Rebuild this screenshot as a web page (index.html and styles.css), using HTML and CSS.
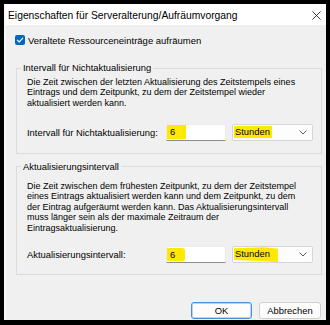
FILE: index.html
```html
<!DOCTYPE html>
<html lang="de">
<head>
<meta charset="utf-8">
<title>Eigenschaften für Serveralterung/Aufräumvorgang</title>
<link rel="stylesheet" href="styles.css">
</head>
<body>
<div class="window">
  <div class="titlebar">
    <span class="title">Eigenschaften für Serveralterung/Aufräumvorgang</span>
    <svg class="close" width="10" height="10" viewBox="0 0 10 10"><path d="M0.5 0.5 L9.5 9.5 M9.5 0.5 L0.5 9.5" stroke="#2b2b2b" stroke-width="1" fill="none"/></svg>
  </div>
  <div class="content">
    <label class="check">
      <span class="box"><svg width="10" height="10" viewBox="0 0 10 10"><path d="M2.3 5.2 L4.2 7 L7.8 3.2" stroke="#fff" stroke-width="1.1" fill="none" stroke-linecap="round" stroke-linejoin="round"/></svg></span>
      <span class="check-label">Veraltete Ressourceneinträge aufräumen</span>
    </label>

    <fieldset class="group group-1">
      <legend>Intervall für Nichtaktualisierung</legend>
      <div class="group-body body-1">
        <p class="desc">Die Zeit zwischen der letzten Aktualisierung des Zeitstempels eines<br>Eintrags und dem Zeitpunkt, zu dem der Zeitstempel wieder<br>aktualisiert werden kann.</p>
        <div class="row row-1">
          <span class="lbl">Intervall für Nichtaktualisierung:</span>
          <div class="input"><span class="hl hl-num">6</span></div>
          <div class="select"><span class="hl hl-unit">Stunden</span><svg class="chev" width="8" height="5" viewBox="0 0 8 5"><path d="M0.5 0.5 L4 4 L7.5 0.5" stroke="#5a5a5a" stroke-width="1" fill="none"/></svg></div>
        </div>
      </div>
    </fieldset>

    <fieldset class="group group-2">
      <legend>Aktualisierungsintervall</legend>
      <div class="group-body body-2">
        <p class="desc">Die Zeit zwischen dem frühesten Zeitpunkt, zu dem der Zeitstempel<br>eines Eintrags aktualisiert werden kann und dem Zeitpunkt, zu dem<br>der Eintrag aufgeräumt werden kann. Das Aktualisierungsintervall<br>muss länger sein als der maximale Zeitraum der<br>Eintragsaktualisierung.</p>
        <div class="row row-2">
          <span class="lbl">Aktualisierungsintervall:</span>
          <div class="input"><span class="hl hl-num hl-num-2">6</span></div>
          <div class="select"><span class="hl hl-unit hl-unit-2">Stunden</span><svg class="chev" width="8" height="5" viewBox="0 0 8 5"><path d="M0.5 0.5 L4 4 L7.5 0.5" stroke="#5a5a5a" stroke-width="1" fill="none"/></svg></div>
        </div>
      </div>
    </fieldset>

    <div class="buttons">
      <button class="btn btn-default">OK</button>
      <button class="btn">Abbrechen</button>
    </div>
  </div>
</div>
</body>
</html>
```

FILE: styles.css
```css
* { box-sizing: border-box; }

html, body {
  margin: 0;
  background: #000;
}

body {
  padding: 4px 4px 5px 4px;
  font-family: "Liberation Sans", Arial, sans-serif;
  color: #000;
}

.window {
  width: 322px;
  height: 316px;
  background: #f0f0f0;
  border-left: 2px solid #f8f8f8;
  display: flex;
  flex-direction: column;
  overflow: hidden;
}

.titlebar {
  height: 21px;
  background: #fff;
  display: flex;
  align-items: center;
  justify-content: space-between;
  padding: 1px 5px 0 2px;
  flex: none;
}

.title {
  font-size: 10.3px;
  white-space: nowrap;
}

.close {
  display: block;
  width: 9px;
  height: 9px;
}

.content {
  flex: 1;
  padding: 9px 4px 0 10px;
  display: flex;
  flex-direction: column;
}

.check {
  display: flex;
  align-items: center;
  height: 12px;
  gap: 3px;
  font-size: 9.5px;
  white-space: nowrap;
}

.box {
  width: 10px;
  height: 10px;
  border-radius: 2px;
  background: #0067c0;
  display: block;
  flex: none;
  margin-left: -1px;
}

.box svg { display: block; }

.group {
  margin: 16px 0 0 0;
  padding: 0;
  border: 1px solid #dcdcdc;
  min-width: 0;
}

.group-2 { margin-top: 7px; }

legend {
  margin-left: 4px;
  padding: 0 2px;
  font-size: 9.4px;
  line-height: 12px;
  white-space: nowrap;
}

.group-body {
  padding: 0 7px 0 10px;
}

.body-1 { padding-top: 3px; padding-bottom: 12px; }
.body-2 { padding-top: 8px; padding-bottom: 11px; }

.desc {
  margin: 0;
  font-size: 9px;
  line-height: 10.45px;
  white-space: nowrap;
}

.row {
  display: grid;
  grid-template-columns: 133px 60px 81px;
  column-gap: 6px;
  align-items: center;
  height: 17px;
}

.row-1 { margin-top: 15.5px; }
.row-2 { margin-top: 13px; }

.lbl {
  font-size: 9.4px;
  white-space: nowrap;
}

.input {
  height: 17px;
  background: #fff;
  border: 1px solid #ececec;
  border-bottom-color: #8c8c8c;
  display: flex;
  align-items: center;
  padding-left: 0;
}

.select {
  height: 17px;
  background: #fdfdfd;
  border: 1px solid #d6d6d6;
  border-radius: 2px;
  display: flex;
  align-items: center;
  justify-content: space-between;
  padding: 0 5px 0 1px;
}

.hl {
  background: #ffe900;
  font-size: 9.4px;
  line-height: 12px;
  white-space: nowrap;
}

.hl-num {
  width: 19px;
  padding-left: 3px;
  height: 14px;
  line-height: 14px;
}

.hl-num-2 {
  width: 18px;
  height: 13px;
  line-height: 13px;
  border-radius: 1px 3px 2px 1px;
}

.hl-unit {
  padding: 0 2px 0 1px;
  height: 12px;
  line-height: 12px;
}

.hl-unit-2 {
  padding: 1px 8px 2px 1px;
  height: 15px;
  clip-path: polygon(0 8%, 70% 0, 100% 10%, 100% 100%, 60% 92%, 0 86%);
}

.chev { display: block; }

.buttons {
  display: flex;
  justify-content: flex-end;
  gap: 7px;
  margin-top: 27px;
  padding-right: 1px;
}

.btn {
  height: 17px;
  width: 62px;
  padding: 0;
  font-family: "Liberation Sans", Arial, sans-serif;
  font-size: 9.4px;
  color: #000;
  background: #fdfdfd;
  border: 1px solid #d0d0d0;
  border-radius: 3px;
}

.btn-default {
  width: 61px;
  border-color: #4a8fd8;
  box-shadow: inset 0 0 0 1px #b9d4f1;
}
```
